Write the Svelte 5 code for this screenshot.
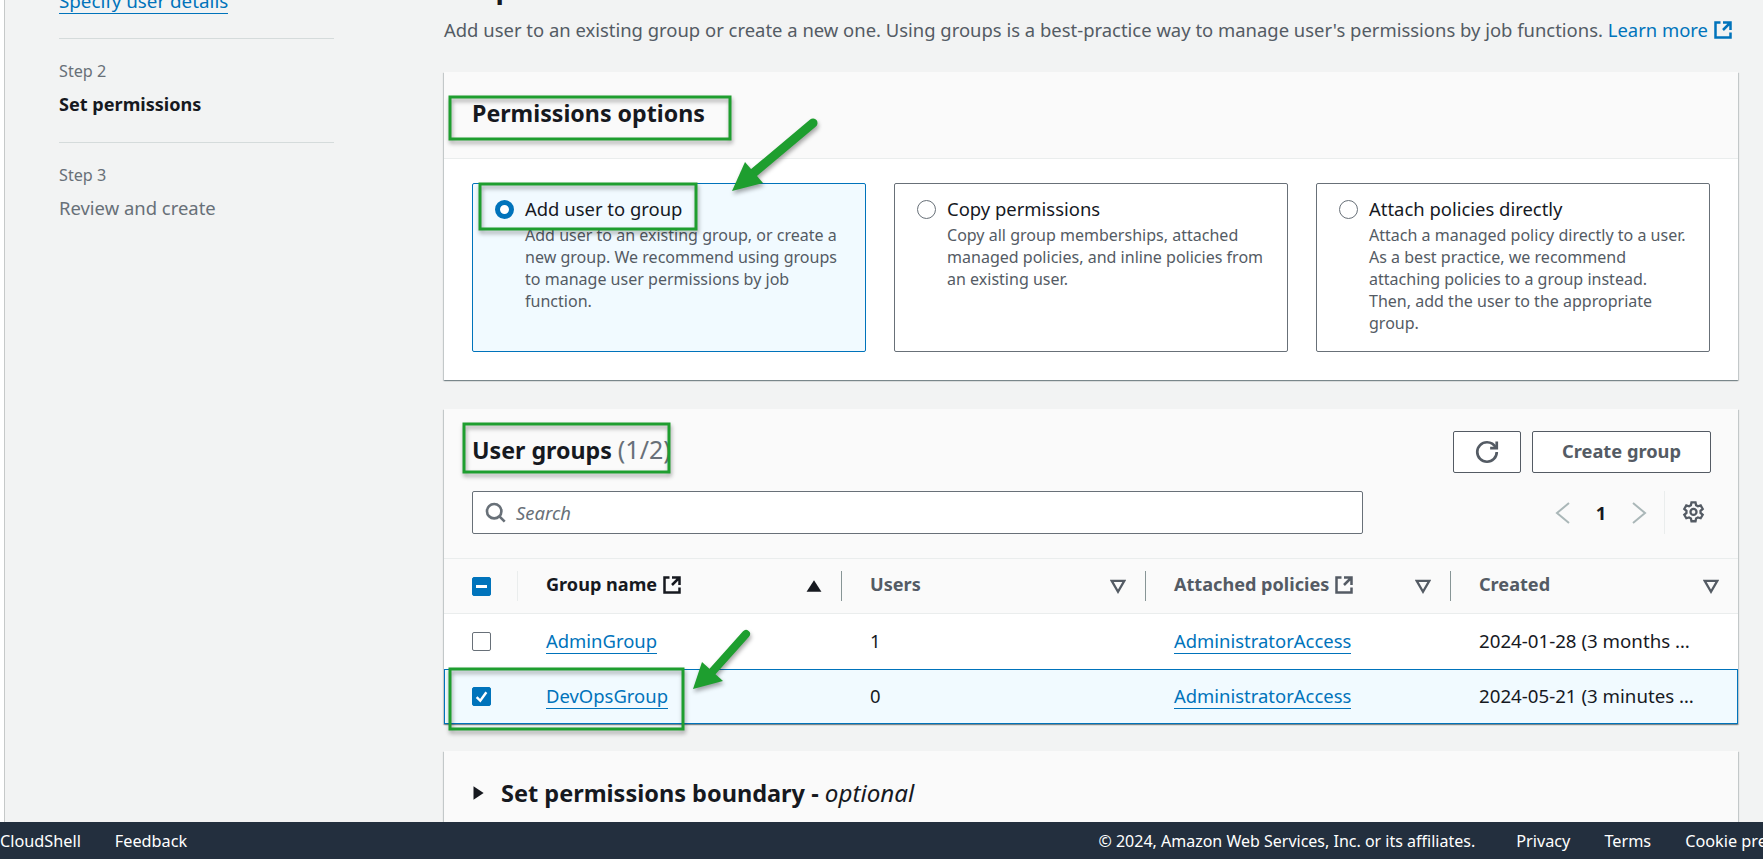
<script>
    const steps = [
        { step: 'Step 2', name: 'Set permissions', active: true },
        { step: 'Step 3', name: 'Review and create', active: false }
    ];

    const options = [
        {
            title: 'Add user to group',
            text: 'Add user to an existing group, or create a new group. We recommend using groups to manage user permissions by job function.',
            selected: true
        },
        {
            title: 'Copy permissions',
            text: 'Copy all group memberships, attached managed policies, and inline policies from an existing user.',
            selected: false
        },
        {
            title: 'Attach policies directly',
            text: 'Attach a managed policy directly to a user. As a best practice, we recommend attaching policies to a group instead. Then, add the user to the appropriate group.',
            selected: false
        }
    ];

    const groups = [
        { name: 'AdminGroup', users: 1, policy: 'AdministratorAccess', created: '2024-01-28 (3 months …', selected: false },
        { name: 'DevOpsGroup', users: 0, policy: 'AdministratorAccess', created: '2024-05-21 (3 minutes …', selected: true }
    ];
</script>

{#snippet external(cls)}
    <svg class="ext {cls}" viewBox="0 0 16 16"><path d="M14 8V2H8M14 2 8 8" /><path d="M6 2H2v12h12v-4" /></svg>
{/snippet}

{#snippet filter()}
    <svg class="sort" viewBox="0 0 14 14"><path d="M1.5 2.5h11L7 12z" /></svg>
{/snippet}

<div class="page">
    <div class="content">
        <nav class="steps">
            <a class="link first" href="#s">Specify user details</a>
            {#each steps as s}
                <div class="step">
                    <small>{s.step}</small>
                    <span class:active={s.active}>{s.name}</span>
                </div>
            {/each}
        </nav>

        <main>
            <h1>Set permissions</h1>
            <p class="intro">
                Add user to an existing group or create a new one. Using groups is a best-practice way to manage user's permissions by job functions.
                <a class="more" href="#m">Learn more {@render external('blue')}</a>
            </p>

            <section class="panel">
                <header class="head"><h2>Permissions options</h2></header>
                <div class="options">
                    {#each options as o}
                        <div class="option" class:selected={o.selected}>
                            <i class="radio"></i>
                            <div>
                                <div class="label">{o.title}</div>
                                <div class="desc">{o.text}</div>
                            </div>
                        </div>
                    {/each}
                </div>
            </section>

            <section class="panel">
                <header class="tools">
                    <div class="title-row">
                        <h2>User groups <span>(1/2)</span></h2>
                        <div class="actions">
                            <button class="btn icon" aria-label="Refresh">
                                <svg viewBox="0 0 16 16"><path d="M14.5 8A6.5 6.5 0 1 1 8 1.5c2.6 0 4.8 1.5 5.9 3.7" /><path d="M14.5 1v4.4h-4.4" /></svg>
                            </button>
                            <button class="btn create">Create group</button>
                        </div>
                    </div>
                    <div class="filter-row">
                        <div class="search">
                            <svg viewBox="0 0 16 16"><circle cx="7" cy="7" r="5.5" /><path d="m11 11 4 4" /></svg>
                            <em>Search</em>
                        </div>
                        <div class="pager">
                            <svg class="chev" viewBox="0 0 16 24"><path d="M14 2 2 12l12 10" /></svg>
                            <b>1</b>
                            <svg class="chev" viewBox="0 0 16 24"><path d="m2 2 12 10L2 22" /></svg>
                            <span class="gear">
                                <svg viewBox="0 0 16 16"><path d="M6.6 1h2.8l.4 1.9 1.3.8 1.9-.6 1.4 2.4-1.5 1.3v1.5l1.5 1.3-1.4 2.4-1.9-.6-1.3.8-.4 1.9H6.6l-.4-1.9-1.3-.8-1.9.6-1.4-2.4 1.5-1.3V6.8L1.6 5.5 3 3.1l1.9.6 1.3-.8z" /><circle cx="8" cy="7.6" r="2.1" /></svg>
                            </span>
                        </div>
                    </div>
                </header>

                <div class="table">
                    <div class="row th">
                        <div class="cell check"><i class="box on"><em class="dash"></em></i></div>
                        <div class="cell strong">
                            <span>Group name</span> {@render external('')}
                            <svg class="sort solid" viewBox="0 0 14 14"><path d="M7 2 13.5 12H.5z" /></svg>
                        </div>
                        <div class="cell"><span>Users</span> {@render filter()}</div>
                        <div class="cell"><span>Attached policies</span> {@render external('')} {@render filter()}</div>
                        <div class="cell"><span>Created</span> {@render filter()}</div>
                    </div>
                    {#each groups as g}
                        <div class="row td" class:picked={g.selected}>
                            <div class="cell check">
                                <i class="box" class:on={g.selected}>
                                    {#if g.selected}
                                        <svg viewBox="0 0 14 14"><path d="m3 7.5 3 3 5-7" /></svg>
                                    {/if}
                                </i>
                            </div>
                            <div class="cell"><a class="link" href="#g">{g.name}</a></div>
                            <div class="cell">{g.users}</div>
                            <div class="cell"><a class="link" href="#p">{g.policy}</a></div>
                            <div class="cell date">{g.created}</div>
                        </div>
                    {/each}
                </div>
            </section>

            <section class="panel boundary">
                <svg viewBox="0 0 12 16"><path d="M2 2l9 6-9 6z" /></svg>
                <h3>Set permissions boundary - <em>optional</em></h3>
            </section>
        </main>
    </div>

    <footer>
        <div class="foot-left"><span>CloudShell</span><span>Feedback</span></div>
        <div class="foot-right">
            <span class="copy">© 2024, Amazon Web Services, Inc. or its affiliates.</span>
            <span>Privacy</span><span>Terms</span><span>Cookie preferences</span>
        </div>
    </footer>

    <!-- annotations drawn on top of the screenshot -->
    <svg class="marks" viewBox="0 0 1763 860">
        <g fill="none" stroke="#1e9e2f" stroke-width="3">
            <rect x="450" y="97" width="280" height="42" />
            <rect x="480" y="184" width="216" height="45" />
            <rect x="464" y="424" width="205" height="48" />
            <rect x="450" y="669" width="233" height="60" />
        </g>
        <g stroke="#1e9e2f" stroke-linecap="round">
            <line x1="813" y1="123" x2="754" y2="172.5" stroke-width="9" />
            <line x1="746" y1="634" x2="712.5" y2="671.5" stroke-width="8" />
        </g>
        <g fill="#1e9e2f">
            <path d="M732 191 745 162 763 183Z" />
            <path d="M693 689 702 662 723 681Z" />
        </g>
    </svg>
</div>

<style>
    :global(body) {
        margin: 0;
        background: #f2f3f3;
        color: #16191f;
        font-family: "Noto Sans", "Open Sans", sans-serif;
        font-size: 18.45px;
    }

    .page {
        position: relative;
        display: grid;
        grid-template-rows: 822px 37px;
        width: 1763px;
        height: 860px;
        overflow: hidden;
        background: #fff;
    }

    .content {
        display: flex;
        overflow: hidden;
        background: #f2f3f3;
        border-left: 1px solid #c6c9c9;
        margin-left: 4px;
    }

    .steps {
        flex: 0 0 275px;
        margin: -12px 0 0 54px;
    }

    .link {
        color: #0073bb;
        text-decoration: none;
        border-bottom: 1px solid #0073bb;
    }

    .first {
        display: inline-block;
        font-size: 18.8px;
        line-height: 24px;
    }

    .step {
        display: flex;
        flex-direction: column;
        margin-top: 24px;
        padding-top: 22px;
        border-top: 1px solid #d5dbdb;
        height: 57px;
        color: #687078;
    }

    .step small {
        font-size: 16.2px;
        line-height: 20px;
        margin-bottom: 13px;
    }

    .step span {
        line-height: 20px;
    }

    .step .active {
        color: #16191f;
        font-size: 18.1px;
        font-weight: 700;
    }

    main {
        flex: 0 0 1294px;
        margin: -31px 0 0 110px;
    }

    h1 {
        margin: 0;
        font-size: 28px;
        line-height: 36px;
        font-weight: 700;
    }

    .intro {
        margin: 13px 0 0;
        line-height: 24px;
        color: #545b64;
        white-space: nowrap;
    }

    .more {
        color: #0073bb;
        text-decoration: none;
    }

    .ext {
        width: 20px;
        height: 20px;
        vertical-align: -3px;
        fill: none;
        stroke: currentColor;
        stroke-width: 2;
    }

    .panel {
        margin-top: 30px;
        background: #fff;
        box-shadow: 0 1px 1px rgba(0, 28, 36, 0.3), 1px 1px 1px rgba(0, 28, 36, 0.15), -1px 1px 1px rgba(0, 28, 36, 0.15);
    }

    .panel + .panel {
        margin-top: 29px;
    }

    .head {
        display: flex;
        align-items: center;
        height: 87px;
        box-sizing: border-box;
        padding: 0 0 4px 28px;
        background: #fafafa;
        border-bottom: 1px solid #eaeded;
    }

    h2 {
        margin: 0;
        font-size: 23.2px;
        line-height: 28px;
        font-weight: 700;
    }

    h2 span {
        font-size: 25px;
        font-weight: 400;
        color: #687078;
    }

    .options {
        display: grid;
        grid-template-columns: repeat(3, 394px);
        gap: 28px;
        padding: 24px 28px 28px;
    }

    .option {
        display: flex;
        gap: 11px;
        height: 169px;
        box-sizing: border-box;
        padding: 16px 18px 0 22px;
        border: 1px solid #687078;
        border-radius: 2px;
    }

    .option.selected {
        background: #f1faff;
        border-color: #0073bb;
    }

    .radio {
        flex: 0 0 auto;
        box-sizing: border-box;
        width: 19px;
        height: 19px;
        margin-top: 0;
        border: 1.5px solid #687078;
        border-radius: 50%;
        background: #fff;
    }

    .selected .radio {
        border: 5.5px solid #0073bb;
    }

    .label {
        line-height: 18px;
        margin-bottom: 6px;
    }

    .desc {
        font-size: 16.05px;
        line-height: 22px;
        color: #545b64;
    }

    .tools {
        padding: 22px 27px 0 28px;
        background: #fafafa;
    }

    .title-row {
        display: flex;
        align-items: center;
        justify-content: space-between;
        height: 42px;
    }

    .title-row h2 {
        margin-bottom: 6px;
    }

    .actions {
        display: flex;
        gap: 11px;
    }

    .btn {
        height: 42px;
        box-sizing: border-box;
        background: #fff;
        border: 1px solid #545b64;
        border-radius: 2px;
        color: #545b64;
        font: 700 18.25px "Noto Sans", sans-serif;
    }

    .btn.icon {
        width: 68px;
        padding: 0;
    }

    .btn.icon svg {
        display: block;
        width: 24px;
        height: 24px;
        margin: auto;
        fill: none;
        stroke: #545b64;
        stroke-width: 1.8;
    }

    .btn.create {
        width: 179px;
        padding: 0 0 4px;
    }

    .filter-row {
        display: flex;
        justify-content: space-between;
        margin-top: 18px;
        height: 67px;
    }

    .search {
        display: flex;
        align-items: center;
        gap: 10px;
        box-sizing: border-box;
        width: 891px;
        height: 43px;
        padding-left: 12px;
        background: #fff;
        border: 1px solid #687078;
        border-radius: 2px;
        color: #687078;
    }

    .search svg {
        width: 21px;
        height: 21px;
        fill: none;
        stroke: #687078;
        stroke-width: 2;
    }

    .pager {
        display: flex;
        align-items: center;
        height: 43px;
        margin-right: 6px;
    }

    .pager b {
        width: 60px;
        text-align: center;
        font-weight: 700;
    }

    .chev {
        width: 16px;
        height: 24px;
        fill: none;
        stroke: #aab7b8;
        stroke-width: 2;
    }

    .gear {
        display: flex;
        align-items: center;
        height: 43px;
        margin-left: 17px;
        padding-left: 17px;
        border-left: 1px solid #eaeded;
    }

    .gear svg {
        width: 23px;
        height: 23px;
        fill: none;
        stroke: #545b64;
        stroke-width: 1.6;
    }

    .row {
        display: grid;
        grid-template-columns: 73px 324px 304px 305px 288px;
        box-sizing: border-box;
        align-items: center;
    }

    .th {
        height: 56px;
        background: #fafafa;
        border-top: 1px solid #eaeded;
        border-bottom: 1px solid #eaeded;
        color: #545b64;
        font-size: 18.1px;
        font-weight: 700;
    }

    .th .cell {
        display: flex;
        align-items: center;
        gap: 5px;
        height: 30px;
        padding-left: 28px;
        padding-right: 19px;
        box-sizing: border-box;
        border-left: 1px solid #879596;
    }

    .th .cell span {
        margin-bottom: 4px;
    }

    .th .cell .ext {
        margin-bottom: 2px;
    }

    .th .check {
        border-left: 0;
    }

    .th .check + .cell {
        border-left-color: #eaeded;
        color: #16191f;
    }

    .sort {
        width: 16px;
        height: 16px;
        margin-left: auto;
        fill: none;
        stroke: #545b64;
        stroke-width: 2;
    }

    .sort.solid {
        fill: #16191f;
        stroke: none;
    }

    .td {
        height: 55px;
    }

    .td .cell {
        padding: 0 0 2px 29px;
        white-space: nowrap;
    }

    .td .check {
        padding: 0 0 0 28px;
    }

    .td .date {
        font-size: 18.7px;
    }

    .td.picked {
        background: #f1faff;
        box-shadow: inset 0 0 0 1px #0073bb;
    }

    .box {
        display: block;
        box-sizing: border-box;
        width: 19px;
        height: 19px;
        border: 1px solid #687078;
        border-radius: 2px;
        background: #fff;
    }

    .box.on {
        position: relative;
        background: #0073bb;
        border-color: #0073bb;
    }

    .box svg {
        display: block;
        fill: none;
        stroke: #fff;
        stroke-width: 2;
    }

    .dash {
        position: absolute;
        left: 3px;
        right: 3px;
        top: 7px;
        height: 3px;
        background: #fff;
    }

    .panel.boundary {
        display: flex;
        align-items: center;
        gap: 16px;
        box-sizing: border-box;
        height: 88px;
        margin-top: 27px;
        padding: 0 0 5px 27px;
        background: #fafafa;
    }

    .boundary svg {
        width: 14px;
        height: 18px;
        fill: #16191f;
    }

    h3 {
        margin: 0;
        font-size: 23.5px;
        font-weight: 700;
    }

    h3 em {
        font-size: 24.2px;
        font-weight: 400;
    }

    footer {
        display: flex;
        justify-content: space-between;
        align-items: center;
        background: #232f3e;
        color: #fff;
        font-size: 16.25px;
        white-space: nowrap;
    }

    .foot-left {
        display: flex;
        gap: 34px;
    }

    .foot-right {
        display: flex;
        gap: 34px;
        margin-right: -69px;
    }

    .copy {
        margin-right: 7px;
        font-size: 16px;
    }

    .marks {
        position: absolute;
        left: 0;
        top: 0;
        width: 1763px;
        height: 860px;
        pointer-events: none;
        filter: drop-shadow(1px 3px 2px rgba(0, 0, 0, 0.35));
    }
</style>
